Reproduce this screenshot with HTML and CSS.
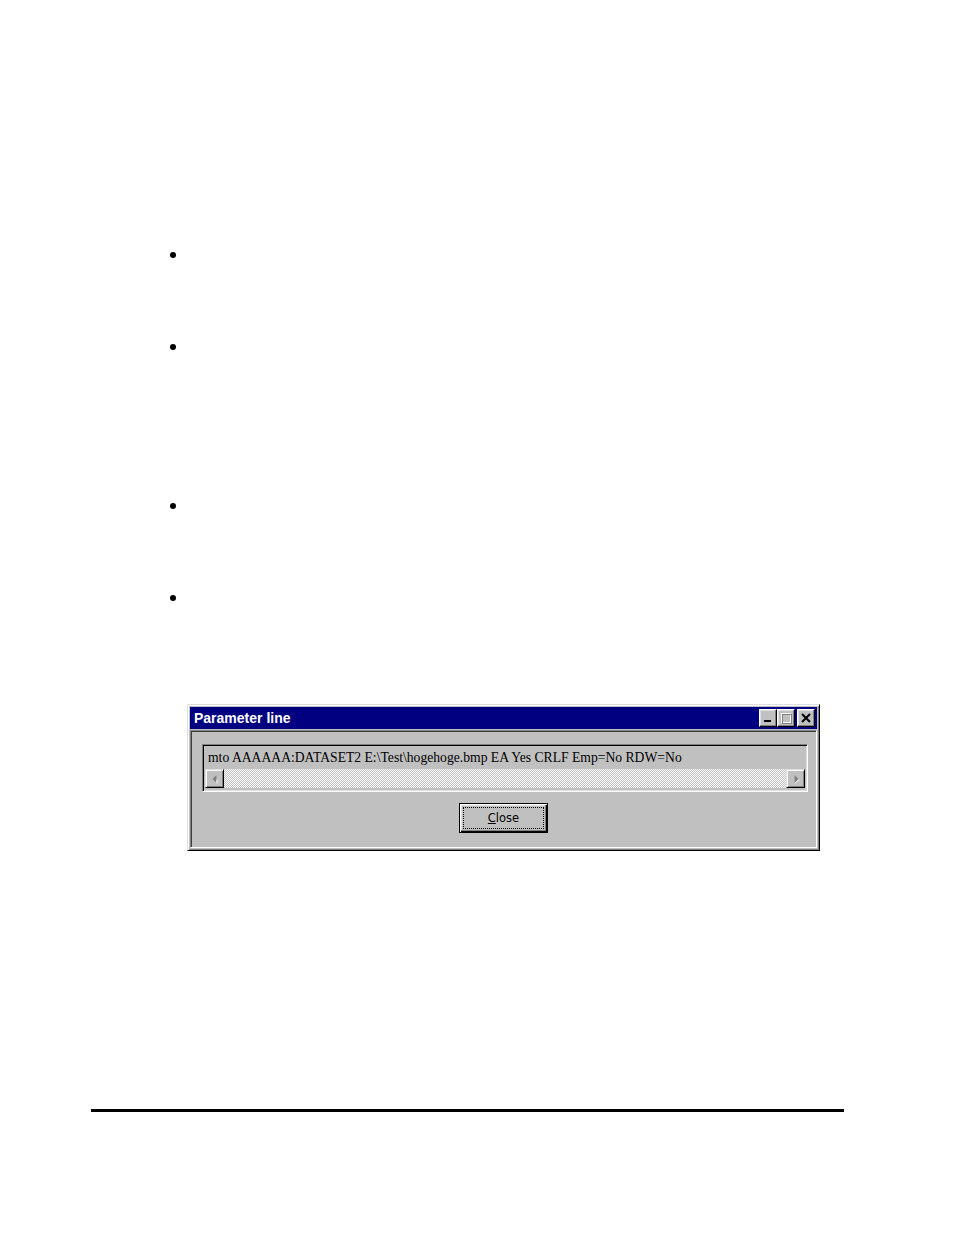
FILE: index.html
```html
<!DOCTYPE html>
<html>
<head>
<meta charset="utf-8">
<link rel="stylesheet" href="styles.css">
</head>
<body>
<div class="page">
  <ul class="bullets">
    <li class="item item-a"><span class="dot"></span></li>
    <li class="item item-b"><span class="dot"></span></li>
    <li class="item item-a"><span class="dot"></span></li>
    <li class="item item-c"><span class="dot"></span></li>
  </ul>
  <div class="window">
    <div class="titlebar">
      <span class="title">Parameter line</span>
      <div class="tbtns">
        <span class="tbtn"><svg width="12" height="12" viewBox="0 0 12 12"><rect x="2" y="8" width="7" height="2" fill="#000"/></svg></span>
        <span class="tbtn"><svg width="12" height="12" viewBox="0 0 12 12"><rect x="1.5" y="1.5" width="9" height="9" fill="none" stroke="#fff" stroke-width="1"/><rect x="1" y="1" width="10" height="2" fill="#fff"/><rect x="2.5" y="2.5" width="9" height="9" fill="none" stroke="#808080" stroke-width="1"/></svg></span>
        <span class="tbtn close"><svg width="12" height="12" viewBox="0 0 12 12"><path d="M2 2 L10 10 M10 2 L2 10" stroke="#000" stroke-width="2"/></svg></span>
      </div>
    </div>
    <div class="client">
      <div class="field">
        <div class="fieldtext">mto AAAAAA:DATASET2 E:\Test\hogehoge.bmp EA Yes CRLF Emp=No RDW=No</div>
        <div class="scrollbar">
          <span class="sbtn"><svg width="10" height="10" viewBox="0 0 10 10"><path d="M6.5 1 L2.5 5 L6.5 9 Z" fill="#808080"/><path d="M7 5.5 L7 9.5" stroke="#fff" stroke-width="1"/></svg></span>
          <span class="track"></span>
          <span class="sbtn"><svg width="10" height="10" viewBox="0 0 10 10"><path d="M3.5 1 L7.5 5 L3.5 9 Z" fill="#808080"/><path d="M4 9.5 L8 5.5" stroke="#fff" stroke-width="1"/></svg></span>
        </div>
      </div>
      <div class="btnrow">
        <button class="btn"><span class="focus"><u>C</u>lose</span></button>
      </div>
    </div>
  </div>
  <div class="rule"></div>
</div>
</body>
</html>
```

FILE: styles.css
```css
html, body {
  margin: 0;
  padding: 0;
  background: #fff;
}
.page {
  width: 954px;
  height: 1235px;
  display: flex;
  flex-direction: column;
}
.bullets {
  list-style: none;
  margin: 0;
  padding: 252px 0 0 170px;
  display: flex;
  flex-direction: column;
}
.item {
  display: flex;
  align-items: flex-start;
}
.item-a { height: 92px; }
.item-b { height: 159px; }
.item-c { height: 109px; }
.dot {
  width: 6px;
  height: 6px;
  border-radius: 50%;
  background: #000;
}
.window {
  margin-left: 187px;
  width: 633px;
  height: 147px;
  box-sizing: border-box;
  background: #c0c0c0;
  border: 1px solid;
  border-color: #dfdfdf #000 #000 #dfdfdf;
  box-shadow: inset 1px 1px 0 #fff, inset -1px -1px 0 #808080;
  padding: 2px;
  display: flex;
  flex-direction: column;
}
.titlebar {
  height: 22px;
  background: #000080;
  display: flex;
  align-items: center;
  justify-content: space-between;
  padding: 0 2px 0 4px;
  flex: none;
}
.title {
  font-family: "Liberation Sans", Arial, sans-serif;
  font-weight: bold;
  font-size: 14px;
  color: #fff;
}
.tbtns {
  display: flex;
  align-items: center;
}
.tbtn {
  width: 18px;
  height: 18px;
  box-sizing: border-box;
  background: #c0c0c0;
  border: 1px solid;
  border-color: #fff #000 #000 #fff;
  box-shadow: inset -1px -1px 0 #808080, inset 1px 1px 0 #dfdfdf;
  display: flex;
  align-items: center;
  justify-content: center;
}
.tbtn.close {
  margin-left: 2px;
}
.client {
  flex: 1;
  margin-top: 1px;
  border-top: 1px solid #808080;
  border-left: 1px solid #808080;
  border-bottom: 1px solid #fff;
  border-right: 1px solid #fff;
  box-shadow: inset 1px 1px 0 #404040;
  padding: 13px 8px 0 11px;
  display: flex;
  flex-direction: column;
}
.field {
  height: 48px;
  box-sizing: border-box;
  border: 1px solid;
  border-color: #808080 #fff #fff #808080;
  box-shadow: inset 1px 1px 0 #000, inset -1px -1px 0 #dfdfdf;
  padding: 2px;
  display: flex;
  flex-direction: column;
}
.fieldtext {
  height: 22px;
  font-family: "Liberation Serif", "Times New Roman", serif;
  font-size: 13.65px;
  line-height: 22px;
  color: #000;
  padding-left: 3px;
  white-space: nowrap;
  overflow: hidden;
}
.scrollbar {
  height: 19px;
  display: flex;
}
.sbtn {
  width: 19px;
  height: 19px;
  box-sizing: border-box;
  background: #c0c0c0;
  border: 1px solid;
  border-color: #dfdfdf #000 #000 #dfdfdf;
  box-shadow: inset 1px 1px 0 #fff, inset -1px -1px 0 #808080;
  display: flex;
  align-items: center;
  justify-content: center;
  flex: none;
}
.track {
  flex: 1;
  background-color: #c0c0c0;
  background-image: repeating-conic-gradient(#fff 0 25%, #c0c0c0 0 50%);
  background-size: 2px 2px;
}
.btnrow {
  display: flex;
  justify-content: center;
  padding-top: 11px;
  padding-right: 3px;
}
.btn {
  width: 89px;
  height: 30px;
  box-sizing: border-box;
  margin: 0;
  padding: 3px;
  background: #c0c0c0;
  border: 1px solid #000;
  box-shadow: inset 1px 1px 0 #fff, inset -1px -1px 0 #000, inset -2px -2px 0 #808080, inset 2px 2px 0 #dfdfdf;
  display: flex;
}
.focus {
  flex: 1;
  border: 1px dotted #000;
  display: flex;
  align-items: center;
  justify-content: center;
  font-family: "DejaVu Sans", Tahoma, sans-serif;
  font-size: 11.5px;
  color: #000;
}
.rule {
  margin-top: 258px;
  margin-left: 91px;
  width: 753px;
  height: 3px;
  background: #000;
}
```
